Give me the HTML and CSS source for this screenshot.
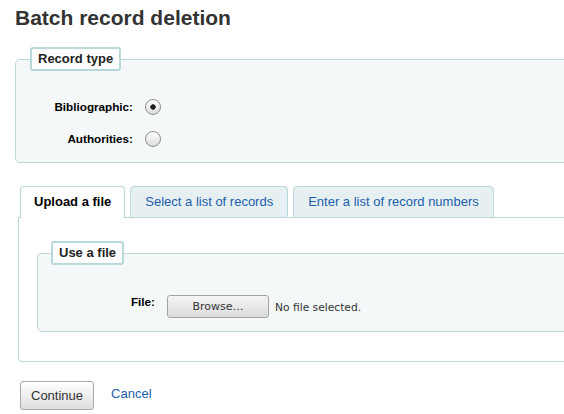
FILE: index.html
```html
<!DOCTYPE html>
<html lang="en">
<head>
<meta charset="utf-8">
<title>Batch record deletion</title>
<link rel="stylesheet" href="styles.css">
</head>
<body>
<div class="page">
  <h1>Batch record deletion</h1>
  <fieldset class="rows">
    <legend>Record type</legend>
    <div class="row">
      <label class="lbl" for="r1">Bibliographic:</label>
      <input class="radio" type="radio" id="r1" name="rt" checked>
    </div>
    <div class="row">
      <label class="lbl" for="r2">Authorities:</label>
      <input class="radio" type="radio" id="r2" name="rt">
    </div>
  </fieldset>

  <div class="tabs-wrap">
    <ul class="tabs">
      <li class="tab active">Upload a file</li>
      <li class="tab"><a href="#">Select a list of records</a></li>
      <li class="tab"><a href="#">Enter a list of record numbers</a></li>
    </ul>
    <div class="panel">
      <fieldset class="rows inner">
        <legend>Use a file</legend>
        <div class="file-row">
          <label class="lbl file-lbl">File:</label>
          <span class="browse">Browse…</span>
          <span class="nofile">No file selected.</span>
        </div>
      </fieldset>
    </div>
  </div>

  <div class="actions">
    <button class="btn" type="button">Continue</button>
    <a class="cancel" href="#">Cancel</a>
  </div>
</div>
</body>
</html>
```

FILE: styles.css
```css
html, body {
  margin: 0;
  padding: 0;
  background: #fff;
  overflow: hidden;
}
body {
  font-family: "Liberation Sans", Arial, sans-serif;
  font-size: 13px;
  color: #000;
}
a {
  color: #1d5eab;
  text-decoration: none;
}
.page {
  padding-left: 15px;
  width: 610px;
}
h1 {
  font-size: 21px;
  line-height: 24px;
  font-weight: bold;
  color: #333;
  margin: 6px 0 0;
}
fieldset.rows {
  border: 1px solid #b9d8d9;
  border-radius: 5px;
  background: #f4f8f9;
  margin: 17px 0 0;
  padding: 20px 0 7px 14px;
  min-width: 0;
}
legend {
  background: #fff;
  border: 2px solid #b9d8d9;
  border-radius: 3px;
  padding: 3px 6px;
  font-weight: bold;
  font-size: 13px;
  line-height: 14px;
  color: #222;
  margin: 0;
}
.row {
  display: flex;
  align-items: center;
  height: 32px;
}
.lbl {
  width: 103px;
  text-align: right;
  font-weight: bold;
  font-size: 11.7px;
  line-height: 14px;
  color: #000;
}
.radio {
  appearance: none;
  -webkit-appearance: none;
  width: 16px;
  height: 16px;
  margin: 0 0 0 12px;
  border: 1px solid #8e8e8e;
  border-radius: 50%;
  box-sizing: border-box;
  background: linear-gradient(#fdfdfd, #dcdcdc);
}
.radio:checked {
  background: radial-gradient(circle, #1e1e1e 0 2.4px, transparent 3px), linear-gradient(#fdfdfd, #dcdcdc);
}
.tabs-wrap {
  margin: 23px 0 0 3px;
}
.tabs {
  list-style: none;
  margin: 0;
  padding: 0 0 0 2px;
  display: flex;
  gap: 5px;
  position: relative;
  z-index: 1;
}
.tab {
  box-sizing: border-box;
  height: 32px;
  line-height: 30px;
  padding: 0 14px;
  border: 1px solid #b9d8d9;
  border-radius: 4px 4px 0 0;
  background: #e6eff1;
  margin-bottom: -1px;
  font-size: 13px;
}
.tab.active {
  background: #fff;
  border-bottom: none;
  font-weight: bold;
  color: #000;
  padding: 0 13px;
}
.panel {
  border: 1px solid #b9d8d9;
  border-radius: 0 0 0 4px;
  padding: 23px 0 29px 18px;
}
fieldset.rows.inner {
  margin: 0;
  padding: 30px 0 13px 13px;
}
.file-row {
  display: flex;
  align-items: flex-start;
}
.file-lbl {
  width: 104px;
}
.browse {
  box-sizing: border-box;
  width: 102px;
  height: 23px;
  margin-left: 12px;
  border: 1px solid #a4a4a4;
  border-radius: 3px;
  background: linear-gradient(#f5f5f5, #dcdcdc);
  font-family: "DejaVu Sans", sans-serif;
  font-size: 11px;
  line-height: 21px;
  text-align: center;
  color: #333;
}
.nofile {
  margin-left: 6px;
  align-self: center;
  font-family: "DejaVu Sans", sans-serif;
  font-size: 10.7px;
  color: #333;
  padding-top: 1px;
}
.actions {
  margin: 19px 0 0 5px;
  display: flex;
  align-items: center;
}
.btn {
  box-sizing: border-box;
  height: 29px;
  padding: 0 10px;
  border: 1px solid #a8a8a8;
  border-radius: 3px;
  background: linear-gradient(#ffffff, #dedede);
  font-family: "Liberation Sans", Arial, sans-serif;
  font-size: 13px;
  color: #333;
}
.cancel {
  margin-left: 17px;
  font-size: 13px;
  position: relative;
  top: -2px;
}
```
